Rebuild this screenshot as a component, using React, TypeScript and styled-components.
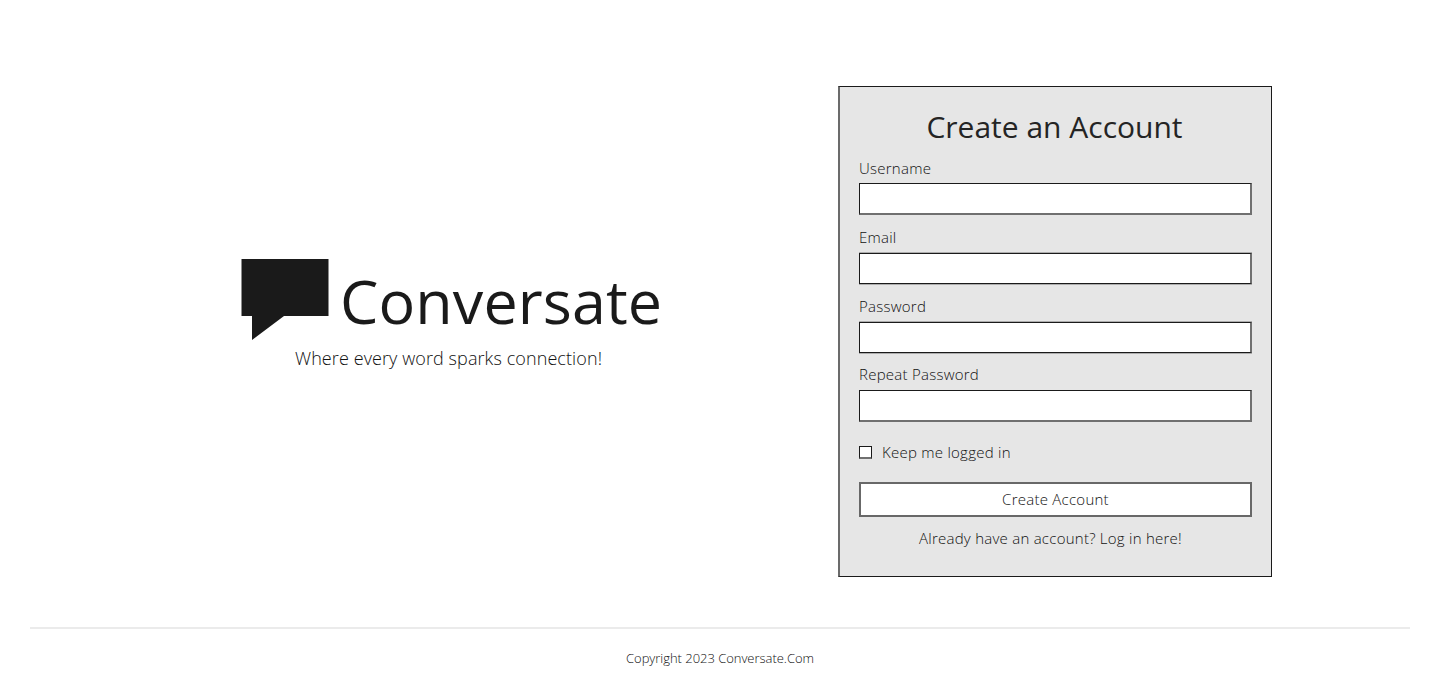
import React from "react";
import styled, { createGlobalStyle } from "styled-components";

const Global = createGlobalStyle`
  * { box-sizing: border-box; }
  body { margin: 0; background: #fff; color: #111; font-family: "Open Sans", sans-serif; font-weight: 300; font-size: 15px; }
`;
const Page = styled.div`
  height: 693px;
  display: flex;
  flex-direction: column;
  overflow: hidden;
`;
const Main = styled.main`
  height: 627px;
  display: flex;
  justify-content: space-between;
  padding: 86px 170px 0 241px;
`;
const Brand = styled.section`
  width: 430px;
  padding-top: 173px;
`;
const LogoRow = styled.div`
  display: flex;
  height: 81px;
  gap: 11px;
`;
const Name = styled.h1`
  margin: 0;
  color: #1a1a1a;
  font-size: 61px;
  line-height: 84px;
  font-weight: 400;
  letter-spacing: 0.1px;
  white-space: nowrap;
`;
const Tagline = styled.p`
  margin: 6px 0 0 54px;
  font-size: 18px;
  line-height: 25px;
  letter-spacing: 0.09px;
  white-space: nowrap;
`;
const Card = styled.form`
  width: 434px;
  height: 491px;
  padding: 19px 19px 0 19px;
  background: #e6e6e6;
  border: 1px solid #1a1a1a;
  border-left: 2px solid #6b6b6b;
  letter-spacing: 0.25px;
`;
const Title = styled.h2`
  margin: 0 2px 11px 0;
  color: #242424;
  font-size: 30px;
  line-height: 41px;
  font-weight: 400;
  letter-spacing: 0;
  text-align: center;
`;
const Field = styled.label<{ $height: number }>`
  display: block;
  height: ${({ $height }) => $height}px;
  line-height: 20px;
`;
const Input = styled.input<{ $gap: number; $crisp: boolean }>`
  display: block;
  width: 100%;
  height: ${({ $crisp }) => ($crisp ? 31 : 32)}px;
  margin-top: ${({ $gap }) => $gap}px;
  border-style: solid;
  border-width: ${({ $crisp }) => ($crisp ? "1px 2px 1px 1px" : "1px 2px 2px 1px")};
  border-color: ${({ $crisp }) => ($crisp ? "#1a1a1a #707070 #1a1a1a #1a1a1a" : "#1a1a1a #707070 #707070 #1a1a1a")};
  border-radius: 0;
  background: #fff;
  ${({ $crisp }) => $crisp && "box-shadow: 0 -1px 0 #adadad, 0 1px 0 #adadad;"}
`;
const Keep = styled.label`
  display: flex;
  align-items: center;
  gap: 10px;
  height: 20px;
  margin: 8px 0 20px;
`;
const Check = styled.input`
  appearance: none;
  width: 13px;
  height: 13px;
  margin: 0;
  border: 1px solid #1a1a1a;
  border-bottom: 2px solid #707070;
  background: #fff;
`;
const Submit = styled.button`
  display: block;
  width: 100%;
  height: 35px;
  padding: 0 0 2px;
  border: 2px solid #686868;
  background: #fff;
  color: inherit;
  font: inherit;
  letter-spacing: inherit;
`;
const Login = styled.p`
  margin: 11px 10px 0 0;
  line-height: 20px;
  text-align: center;
`;
const Footer = styled.footer`
  margin: 0 32px 0 30px;
  padding-top: 20px;
  border-top: 2px solid #ebebeb;
  font-size: 13px;
  line-height: 18px;
  letter-spacing: -0.03px;
  text-align: center;
`;

const fields = [
  { label: "Username", type: "text", gap: 5, height: 69, crisp: false },
  { label: "Email", type: "text", gap: 6, height: 69, crisp: true },
  { label: "Password", type: "password", gap: 6, height: 68, crisp: true },
  { label: "Repeat Password", type: "password", gap: 6, height: 70, crisp: false },
];

export default function App() {
  return (
    <Page>
      <Global />
      <Main>
        <Brand>
          <LogoRow>
            <svg width="88" height="81" viewBox="0 0 88 81" aria-hidden="true">
              <path d="M.5 0H87.5V57H43L11 81V57H.5Z" fill="#1a1a1a" />
            </svg>
            <Name>Conversate</Name>
          </LogoRow>
          <Tagline>Where every word sparks connection!</Tagline>
        </Brand>
        <Card>
          <Title>Create an Account</Title>
          {fields.map(({ label, type, gap, height, crisp }) => (
            <Field key={label} $height={height}>
              {label}
              <Input type={type} $gap={gap} $crisp={crisp} />
            </Field>
          ))}
          <Keep><Check type="checkbox" />Keep me logged in</Keep>
          <Submit type="button">Create Account</Submit>
          <Login>Already have an account? Log in here!</Login>
        </Card>
      </Main>
      <Footer>Copyright 2023 Conversate.Com</Footer>
    </Page>
  );
}
